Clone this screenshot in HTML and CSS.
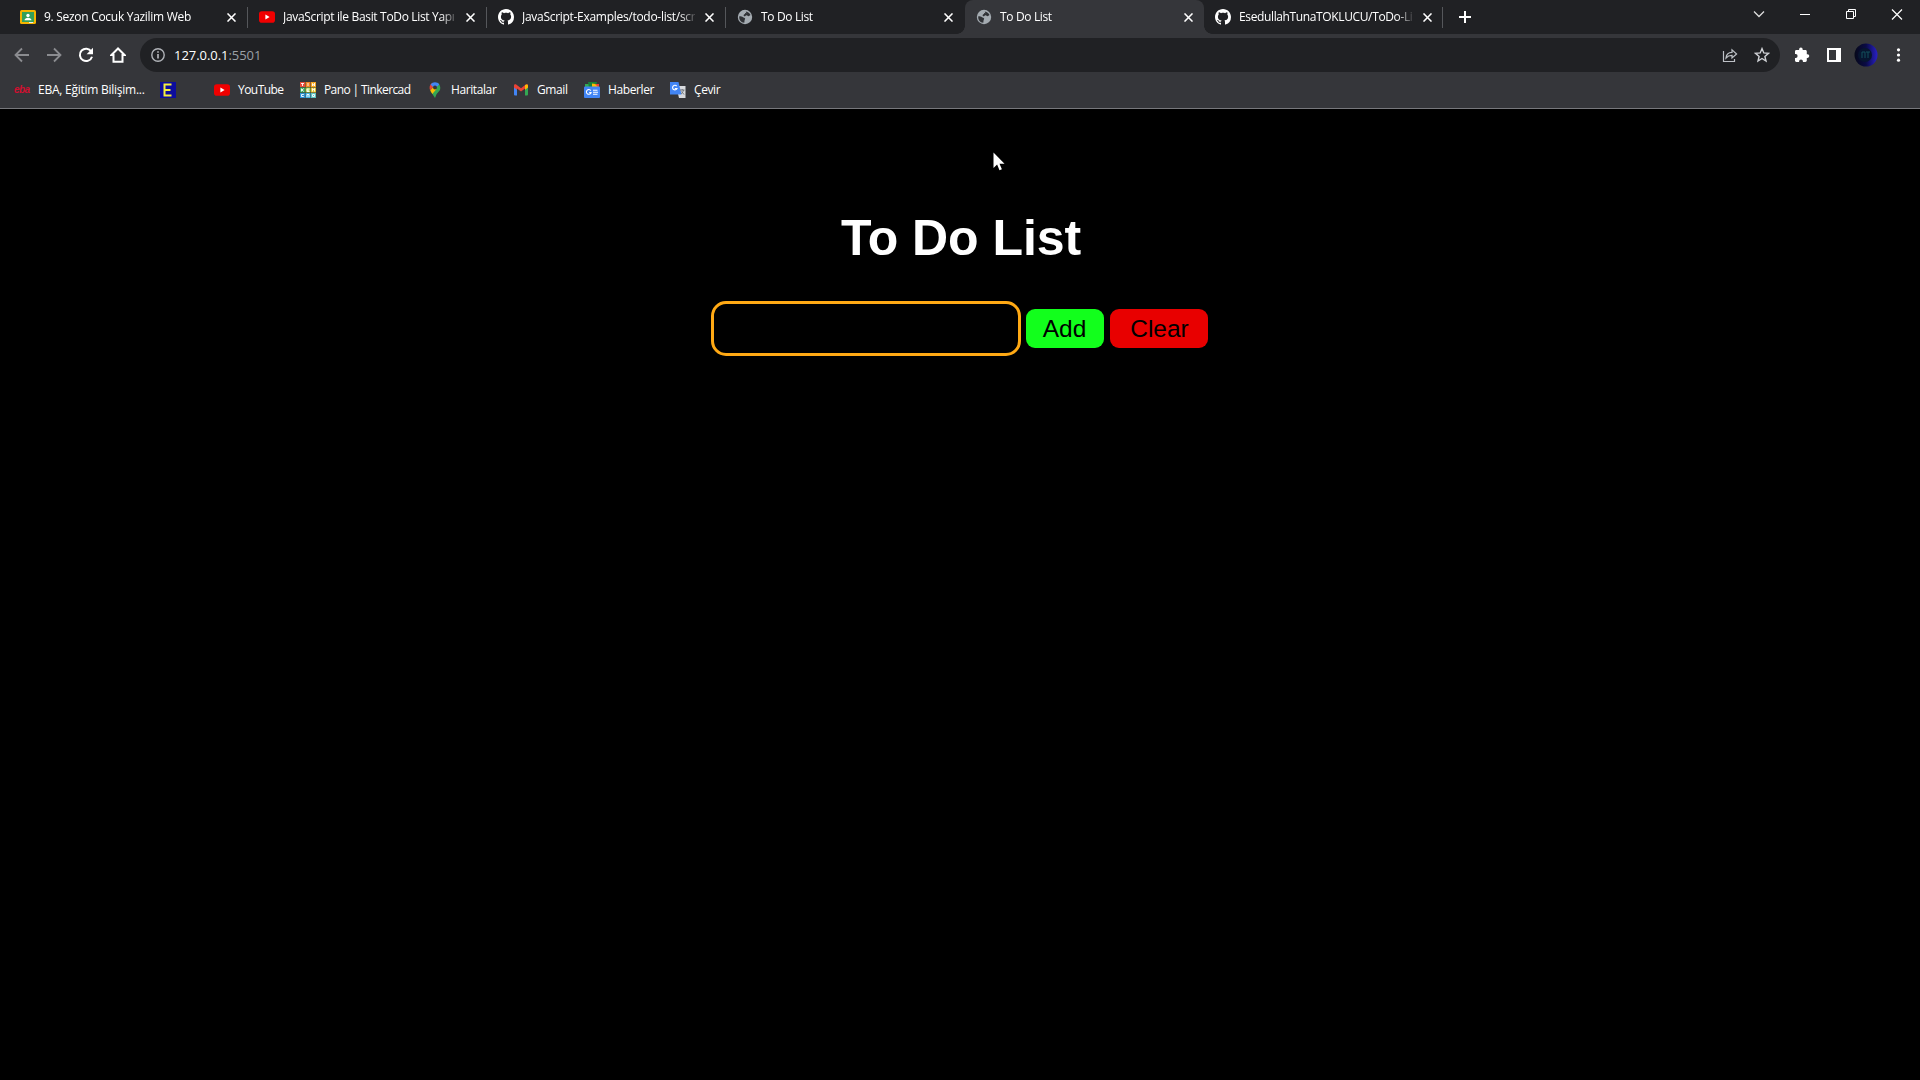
FILE: index.html
```html
<!DOCTYPE html>
<html lang="tr">
<head>
<meta charset="utf-8">
<title>To Do List</title>
<link rel="stylesheet" href="styles.css">
</head>
<body>
<svg class="defs" aria-hidden="true">
  <symbol id="close" viewBox="0 0 8 8"><path d="M.4.4l7.2 7.2M7.6.4L.4 7.6" fill="none" stroke="#fff" stroke-width="1.4"/></symbol>
  <symbol id="youtube" viewBox="0 0 16 16"><rect y="2.3" width="16" height="11.4" rx="2.8" fill="#f00000"/><path d="M6.4 5.6v4.8l4.2-2.4z" fill="#fff"/></symbol>
  <symbol id="github" viewBox="0 0 16 16"><path fill="#fff" d="M8 0C3.58 0 0 3.58 0 8c0 3.54 2.29 6.53 5.47 7.59.4.07.55-.17.55-.38 0-.19-.01-.82-.01-1.49-2.01.37-2.53-.49-2.69-.94-.09-.23-.48-.94-.82-1.13-.28-.15-.68-.52-.01-.53.63-.01 1.08.58 1.23.82.72 1.21 1.87.87 2.33.66.07-.52.28-.87.51-1.07-1.78-.2-3.64-.89-3.64-3.95 0-.87.31-1.59.82-2.15-.08-.2-.36-1.02.08-2.12 0 0 .67-.21 2.2.82.64-.18 1.32-.27 2-.27s1.36.09 2 .27c1.53-1.04 2.2-.82 2.2-.82.44 1.1.16 1.92.08 2.12.51.56.82 1.27.82 2.15 0 3.07-1.87 3.75-3.65 3.95.29.25.54.73.54 1.48 0 1.07-.01 1.93-.01 2.2 0 .21.15.46.55.38A8.01 8.01 0 0 0 16 8c0-4.42-3.58-8-8-8z"/></symbol>
  <symbol id="globe" viewBox="0 0 16 16"><circle cx="8" cy="8" r="7.2" fill="#a4abb1"/><path d="M2.3 7.2c1.5.1 3 .2 3.7 1.1.5.7 1.8.3 2.1 1.2.2.9-.6 1.3-.6 2.3l-.2 1.9C4 13.6 1.8 10.6 2.3 7.2zM8.8 2.4c2.3.2 4 1.7 4.7 3.6-.8.3-1.1 1.2-2 1.2s-.9-1-1.9-1c-1.1 0-1.2 1.3-2.4 1-.9-.3-.7-1.5.1-1.9.9-.5 2-.3 2-1.4z" fill="#303236"/></symbol>
</svg>

<header class="browser">
  <div class="tabstrip">
    <div class="tab">
      <svg class="fav" viewBox="0 0 16 16"><rect y="1" width="16" height="14" rx="1.5" fill="#f4b400"/><rect x="2" y="3" width="12" height="10" fill="#34a05a"/><circle cx="8" cy="6.5" r="1.7" fill="#fff"/><path d="M4.5 11.3c0-3.4 7-3.4 7 0z" fill="#fff"/><path d="M9 13h4v1H9z" fill="#eee"/></svg>
      <span class="title t1">9. Sezon Cocuk Yazilim Web</span><svg class="close"><use href="#close"/></svg>
    </div>
    <div class="tab"><svg class="fav"><use href="#youtube"/></svg><span class="title t2">JavaScript ile Basit ToDo List Yapı</span><svg class="close"><use href="#close"/></svg></div>
    <div class="tab"><svg class="fav"><use href="#github"/></svg><span class="title t3">JavaScript-Examples/todo-list/scr</span><svg class="close"><use href="#close"/></svg></div>
    <div class="tab plain"><svg class="fav"><use href="#globe"/></svg><span class="title t4">To Do List</span><svg class="close"><use href="#close"/></svg></div>
    <div class="tab active"><svg class="fav"><use href="#globe"/></svg><span class="title t4">To Do List</span><svg class="close"><use href="#close"/></svg></div>
    <div class="tab"><svg class="fav"><use href="#github"/></svg><span class="title t6">EsedullahTunaTOKLUCU/ToDo-Lis</span><svg class="close"><use href="#close"/></svg></div>
    <svg class="newtab" viewBox="0 0 12 12"><path d="M6 0v12M0 6h12" stroke="#fff" stroke-width="2"/></svg>
    <div class="window">
      <svg viewBox="0 0 46 28"><path d="M18 11.5l5 5 5-5" fill="none" stroke="#ddd" stroke-width="1.3"/></svg>
      <svg viewBox="0 0 46 28"><path d="M18 14.5h10" stroke="#fff"/></svg>
      <svg viewBox="0 0 46 28"><path d="M18.5 11.5h7v7h-7zM20.5 11V9.5h7v7H26" fill="none" stroke="#fff"/></svg>
      <svg viewBox="0 0 46 28"><path d="M18 9.5l10 10M28 9.5l-10 10" stroke="#fff" stroke-width="1.2"/></svg>
    </div>
  </div>

  <div class="toolbar">
    <svg class="nav" viewBox="0 0 16 16"><path d="M15 8H2M8 1.5L1.5 8 8 14.5" fill="none" stroke="#8b8c90" stroke-width="1.8"/></svg>
    <svg class="nav" viewBox="0 0 16 16"><path d="M1 8h13M8 1.5L14.5 8 8 14.5" fill="none" stroke="#8b8c90" stroke-width="1.8"/></svg>
    <svg class="nav" viewBox="0 0 16 16"><path d="M13.3 4.5A6.2 6.2 0 1 0 14 9.7" fill="none" stroke="#fff" stroke-width="2"/><path d="M15 .8v6.4H8.6z" fill="#fff"/></svg>
    <svg class="nav" viewBox="0 0 16 16"><path d="M8 1.5L1.5 8H3.5v6.7h9V8h2z" fill="none" stroke="#fff" stroke-width="2"/></svg>
    <div class="omnibox">
      <svg class="info" viewBox="0 0 14 14"><circle cx="7" cy="7" r="6.2" fill="none" stroke="#b0b3b8" stroke-width="1.4"/><path d="M7 6v4.5M7 3.3v1.5" stroke="#c3c5c9" stroke-width="1.5"/></svg>
      <span class="url">127.0.0.1<span class="port">:5501</span></span>
      <svg class="share" viewBox="0 0 16 16"><path d="M1.5 4v10.500h11V12M4 11c.3-3.800 2.500-5.500 6-5.600V2.800L14.600 7 10 11V8.400C7.500 8.400 5.500 9.200 4 11z" fill="none" stroke="#bdc1c6" stroke-width="1.2"/></svg>
      <svg class="star" viewBox="0 0 16 16"><path d="M8 1.600l1.800 4.300 4.700.4-3.600 3.100 1.100 4.600L8 11.500 4 14l1.100-4.600-3.600-3.100 4.700-.4z" fill="none" stroke="#d0d2d6" stroke-width="1.4"/></svg>
    </div>
    <div class="actions">
      <svg class="act" viewBox="0 0 16 16"><path d="M13.500 7.300h-.7V4.500c0-.8-.6-1.400-1.400-1.400H8.700v-.7a1.800 1.800 0 0 0-3.600 0v.7H2.400C1.600 3.100 1 3.700 1 4.500v2.600h.7a1.900 1.900 0 0 1 0 3.800H1v2.700c0 .8.600 1.400 1.400 1.400h2.700v-.7a1.900 1.900 0 0 1 3.800 0v.7h2.500c.8 0 1.400-.6 1.400-1.400v-2.700h.7a1.800 1.800 0 0 0 0-3.600z" fill="#fff"/></svg>
      <svg class="act" viewBox="0 0 16 16"><path d="M1 1h14v14H1zM3 3v10h7V3z" fill="#fff" fill-rule="evenodd"/></svg>
      <svg class="avatar" viewBox="0 0 24 24"><defs><linearGradient id="av"><stop offset="0" stop-color="#060819"/><stop offset=".5" stop-color="#0a0b45"/><stop offset="1" stop-color="#2920c8"/></linearGradient></defs><circle cx="12" cy="12" r="11.5" fill="url(#av)"/><circle cx="11" cy="12" r="7" fill="#071530"/><path d="M8 9v6M8 9h3v6M14 9v6M12 9h4" stroke="#12505c" fill="none"/></svg>
      <svg class="act" viewBox="0 0 16 16"><g fill="#fff"><circle cx="8.5" cy="2.8" r="1.6"/><circle cx="8.5" cy="8" r="1.6"/><circle cx="8.5" cy="13.2" r="1.6"/></g></svg>
    </div>
  </div>

  <nav class="bookmarks">
    <div class="bm b1"><span class="eba">eba</span><span class="label">EBA, Eğitim Bilişim...</span></div>
    <div class="bm b2"><span class="e-icon"><svg viewBox="0 0 16 16"><path d="M11.500 2.500H4.500v11h7M4.500 8h6" fill="none" stroke="#f5ef3c" stroke-width="2"/></svg></span></div>
    <div class="bm b3"><svg><use href="#youtube"/></svg><span class="label">YouTube</span></div>
    <div class="bm b4"><svg viewBox="0 0 16 16"><path fill="#e5493a" d="M0 0h5v5H0z"/><path fill="#f08222" d="M5.500 0h5v5h-5z"/><path fill="#f5a623" d="M11 0h5v5h-5z"/><path fill="#3ba55c" d="M0 5.500h5v5H0z"/><path fill="#a9cf46" d="M5.500 5.500h5v5h-5z"/><path fill="#e8c32f" d="M11 5.500h5v5h-5z"/><path fill="#2b8fd0" d="M0 11h5v5H0z"/><path fill="#43b4e4" d="M5.500 11h5v5h-5z"/><path fill="#5cc2c0" d="M11 11h5v5h-5z"/><path d="M1 1.500h3M2.500 1.500V4M8 1v3M12.500 4V1.500L14.500 4V1M1.500 6.500v3M3.800 6.500L2 8l1.800 1.500M9.500 7H7v2.500h2.500M7 8.200h2M12.500 9.500v-3l1 1.500 1-1.500v3M3.800 12.500H1.500v2h2.300M7 15v-2.500h2V15M12.500 12.500h2v2h-2z" stroke="#fff" stroke-width=".9" fill="none"/></svg><span class="label">Pano | Tinkercad</span></div>
    <div class="bm b5"><svg viewBox="0 0 16 16"><path d="M3.300 8.700L8 16l1.500-3.800L13 8c1-3-.500-6-2.500-7.200z" fill="#34a853"/><path d="M3.200 8.500L9.500 1 5 1C2.500 2.800 2 6 3.200 8.500z" fill="#ea4335"/><path d="M3.600 2.500A5.500 5.500 0 0 1 12.300 2.300L8 7z" fill="#4285f4"/><path d="M3.300 8.600L6.500 4.700 9.500 7 5.300 12z" fill="#fbbc04"/><circle cx="8" cy="5.5" r="2" fill="#35363a"/></svg><span class="label">Haritalar</span></div>
    <div class="bm b6"><svg viewBox="0 0 16 16"><path d="M1 5h3v8.500H2a1 1 0 0 1-1-1z" fill="#4285f4"/><path d="M12 5h3v7.500a1 1 0 0 1-1 1h-2z" fill="#34a853"/><path d="M1 3.500C1 2.200 2.500 2 3.500 2.700L8 6.200l4.500-3.500C13.500 2 15 2.200 15 3.500V5.500l-3 2.200V6.500l-4 3-4-3v1.200l-3-2.200z" fill="#ea4335"/><path d="M12 3.100C13.300 2 15 2.200 15 3.800v1.700l-3 2.200z" fill="#fbbc04"/></svg><span class="label">Gmail</span></div>
    <div class="bm b7"><svg viewBox="0 0 16 16"><path d="M1 2h8v5H1z" fill="#34a853"/><path d="M4 0h9l-1 6H5z" fill="#188038"/><path d="M8 1.500l7 1V7H8z" fill="#fbbc04"/><path d="M11 2h4v4z" fill="#ea4335"/><rect y="4.5" width="16" height="11.5" rx="1" fill="#4285f4"/><path d="M6.800 8.600A2.400 2.400 0 1 0 7.100 10.500H5.200M9 8.300h4.500M9 10.300h5M9 12.300h4.500" fill="none" stroke="#fff" stroke-width="1.1"/></svg><span class="label">Haberler</span></div>
    <div class="bm b8"><svg viewBox="0 0 16 16"><path d="M6 4h9.500v12H9z" fill="#d8dade"/><path d="M0 0h8.500l3 12.500H0z" fill="#4285f4"/><path d="M6.700 4.200A2.300 2.300 0 1 0 7 6.500H4.800" fill="none" stroke="#fff" stroke-width="1.1"/><path d="M10 8h4.500M12.200 7v1M13.500 8c-.5 2-1.500 3-2.500 4M11.500 9.500l2.500 3" stroke="#70757a" fill="none"/></svg><span class="label">Çevir</span></div>
  </nav>
</header>

<main class="page">
  <h1>To Do List</h1>
  <form class="entry">
    <input class="task" type="text" aria-label="To Do">
    <button class="btn add" type="button">Add</button>
    <button class="btn clear" type="button">Clear</button>
  </form>
</main>
<svg class="cursor" viewBox="0 0 12 19"><path d="M.5.5v15.500l3.600-3.400 2.400 5.600 2.400-1-2.400-5.400h5z" fill="#fff"/></svg>
</body>
</html>
```
FILE: styles.css
```css
* { box-sizing: border-box; }
body { margin: 0; height: 1080px; background: #000; overflow: hidden; font-family: "Open Sans", "Noto Sans", sans-serif; }
svg { display: block; flex: none; }
.defs { position: absolute; width: 0; height: 0; }

.browser { height: 109px; background: #35363a; border-bottom: 1px solid #77787c; color: #fff; font-size: 12px; }
.tabstrip { display: flex; height: 34px; padding-left: 9px; background: #202124; }
.tab { position: relative; display: flex; align-items: center; width: 239px; padding: 0 11px; border-style: solid; border-color: transparent; border-image: linear-gradient(transparent 8px, #55575b 8px, #55575b 27px, transparent 27px) 1; border-width: 0 1px 0 0; }
.tab.plain { border-image: none; }
.tab.active { background: #35363a; border: 0; border-radius: 8px 8px 0 0; }
.tab.active::before, .tab.active::after { content: ""; position: absolute; bottom: 0; width: 8px; height: 8px; }
.tab.active::before { left: -8px; background: radial-gradient(circle at 0 0, transparent 7.5px, #35363a 8px); }
.tab.active::after { right: -8px; background: radial-gradient(circle at 100% 0, transparent 7.5px, #35363a 8px); }
.fav { width: 16px; height: 16px; }
.title { width: 174px; margin-left: 8px; white-space: nowrap; line-height: 18px; -webkit-mask-image: linear-gradient(90deg, #000 158px, transparent 176px); mask-image: linear-gradient(90deg, #000 158px, transparent 176px); }
.close { width: 9px; height: 9px; margin-left: 10px; }
.t1 { letter-spacing: -.29px; }
.t2 { letter-spacing: -.33px; }
.t3 { letter-spacing: -.29px; }
.t4 { letter-spacing: -.35px; }
.t6 { letter-spacing: -.37px; }
.newtab { width: 12px; height: 12px; margin: 11px 0 0 16px; }
.window { display: flex; margin-left: auto; }
.window svg { width: 46px; height: 28px; }

.toolbar { display: flex; align-items: center; height: 42px; padding: 0 14px; }
.nav { width: 16px; height: 16px; margin-right: 16px; }
.omnibox { display: flex; align-items: center; width: 1640px; height: 34px; padding: 0 10px 0 11px; margin-left: -2px; border-radius: 17px; background: #202124; }
.info { width: 14px; height: 14px; }
.url { margin-left: 9px; font-size: 13px; line-height: 18px; letter-spacing: -.05px; }
.port { color: #9aa0a6; }
.share { width: 16px; height: 16px; margin-left: auto; }
.star { width: 16px; height: 16px; margin-left: 16px; }
.actions { display: flex; align-items: center; margin-left: 14px; }
.act { width: 16px; height: 16px; }
.act + .act { margin-left: 16px; }
.avatar { width: 24px; height: 24px; margin: 0 12px; }

.bookmarks { display: flex; align-items: center; height: 28px; padding-left: 14px; }
.bm { display: flex; align-items: center; height: 18px; gap: 8px; }
.bm svg { width: 16px; height: 16px; }
.label { white-space: nowrap; letter-spacing: -.4px; line-height: 18px; }
.eba { width: 16px; color: #d01030; font: italic bold 10px/16px "Liberation Sans", sans-serif; letter-spacing: -.6px; }
.e-icon { width: 16px; height: 16px; margin-left: -1px; background: #0d0d9c; }
.b1 { width: 147px; }
.b1 .label { letter-spacing: -.25px; }
.b2 { width: 53px; }
.b3 { width: 86px; }
.b3 .label { letter-spacing: -.55px; }
.b4 { width: 127px; }
.b4 .label { letter-spacing: -.6px; }
.b5 { width: 86px; }
.b6 { width: 71px; }
.b7 { width: 86px; }

.page { display: flex; flex-direction: column; align-items: center; font-family: "Liberation Sans", Arial, sans-serif; }
h1 { margin: 100px 0 0 2px; color: #fff; font-size: 50px; line-height: 58px; letter-spacing: -.05px; }
.entry { display: flex; align-items: center; gap: 5px; margin: 34px 2px 0 0; }
.task { width: 310px; height: 55px; border: 3px solid #ffa914; border-radius: 15px; background: #000; color: #fff; font-size: 25px; outline: 0; }
.btn { height: 39px; padding: 0; border: 0; border-radius: 9px; color: #000; font: 24.5px "Liberation Sans", Arial, sans-serif; }
.add { width: 78px; background: #12ff1c; }
.clear { width: 98px; margin-left: 1px; padding-left: 2px; background: #e80000; }
.cursor { position: absolute; left: 993px; top: 152px; width: 12px; height: 19px; }
```
